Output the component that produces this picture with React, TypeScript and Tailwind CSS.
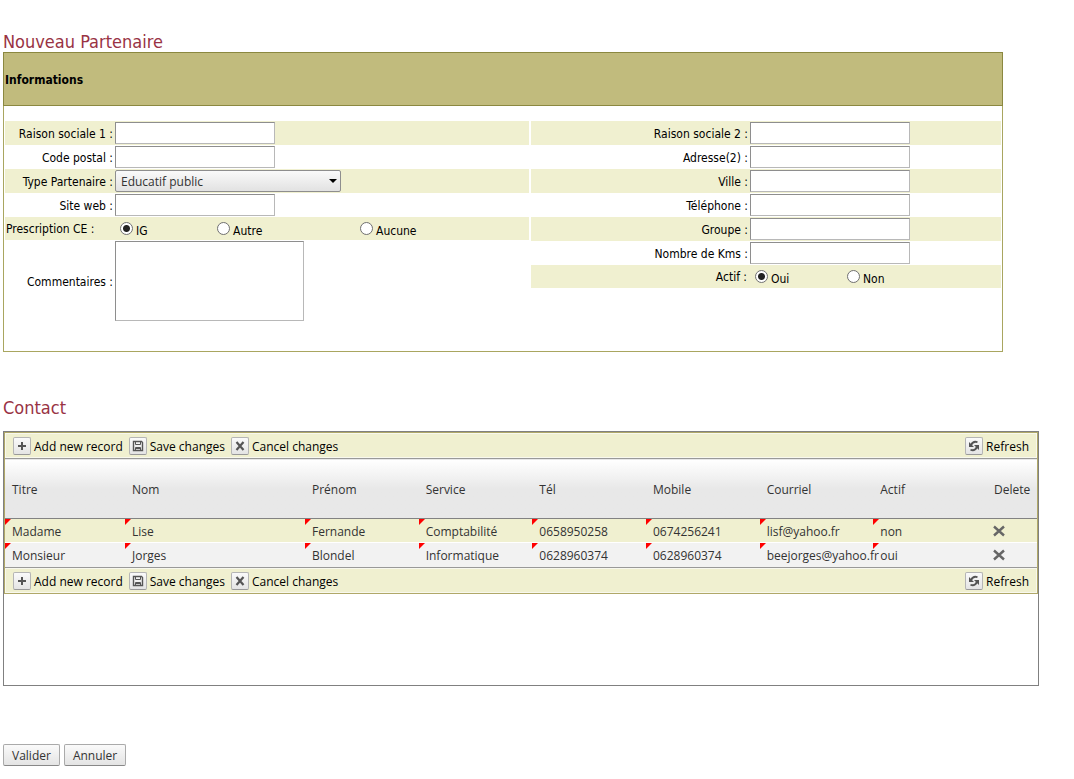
import { ReactNode } from "react";
import clsx from "clsx";

const tahoma = "font-['DejaVu_Sans_Condensed','DejaVu_Sans',sans-serif]";
const segoe = "font-['Open_Sans','Noto_Sans',sans-serif]";

const inputClass =
  "block h-[22px] w-40 border border-t-[#8e8e8e] border-l-[#8e8e8e] border-r-[#b8b8b8] border-b-[#b8b8b8] bg-white px-1 outline-none";

const contacts = [
  ["Madame", "Lise", "Fernande", "Comptabilité", "0658950258", "0674256241", "lisf@yahoo.fr", "non"],
  ["Monsieur", "Jorges", "Blondel", "Informatique", "0628960374", "0628960374", "beejorges@yahoo.fr", "oui"],
];

const columns = ["Titre", "Nom", "Prénom", "Service", "Tél", "Mobile", "Courriel", "Actif", "Delete"];

type RowProps = {
  id?: string;
  label: string;
  labelClass: string;
  shaded?: boolean;
  children: ReactNode;
};

function Row({ id, label, labelClass, shaded, children }: RowProps) {
  return (
    <div className={clsx("flex min-h-6 items-center", shaded && "bg-[#f0f0d0]")}>
      <label htmlFor={id} className={clsx("shrink-0 pt-0.5 pr-0.5 text-right whitespace-nowrap", labelClass)}>
        {label}
      </label>
      {children}
    </div>
  );
}

type TextRowProps = { id: string; label: string; labelClass: string; shaded?: boolean };

function TextRow({ id, label, labelClass, shaded }: TextRowProps) {
  return (
    <Row id={id} label={label} labelClass={labelClass} shaded={shaded}>
      <input id={id} type="text" className={inputClass} />
    </Row>
  );
}

type RadioProps = { name: string; label: string; checked?: boolean; className?: string };

function Radio({ name, label, checked, className }: RadioProps) {
  return (
    <label className={clsx("flex items-center gap-[3px]", className)}>
      <input
        type="radio"
        name={name}
        defaultChecked={checked}
        className="size-[13px] appearance-none rounded-full border border-[#707070] bg-white checked:bg-[radial-gradient(circle,#222_3px,#fff_4px)]"
      />
      <span className="pt-1">{label}</span>
    </label>
  );
}

function PlusIcon() {
  return (
    <svg viewBox="0 0 16 16" className="size-4" fill="none" stroke="#555" strokeWidth="2">
      <path d="M8 4v8M4 8h8" />
    </svg>
  );
}

function SaveIcon() {
  return (
    <svg viewBox="0 0 16 16" className="size-4" fill="none" stroke="#555">
      <path d="M3.5 3.5h8l1 1v8h-9z" strokeWidth="1.4" />
      <path d="M5.5 3.5v3h5v-3M5.5 12.5v-3h5v3M5.5 10.5h5" />
    </svg>
  );
}

function CancelIcon() {
  return (
    <svg viewBox="0 0 16 16" className="size-4" fill="none" stroke="#555" strokeWidth="2.2">
      <path d="M4.5 4l7 8M11.5 4l-7 8" />
    </svg>
  );
}

function RefreshIcon() {
  return (
    <svg viewBox="0 0 16 16" className="size-4" fill="none" stroke="#555" strokeWidth="1.8">
      <path d="M11.5 4.300C9 3.200 6.500 4.200 5 7M4.500 11.700C7 12.800 9.500 11.800 11 9" />
      <path d="M3 4v5h5zM13 12V7H8z" fill="#555" stroke="none" />
    </svg>
  );
}

function ToolButton({ icon, label }: { icon: ReactNode; label: string }) {
  return (
    <button type="button" className="flex items-center gap-[3px] text-black">
      <span className="flex size-[18px] items-center justify-center rounded-xs border border-[#b5b5b5] border-b-[#999] bg-linear-to-b from-[#fafafa] to-[#e4e4e4]">
        {icon}
      </span>
      <span className="pt-0.5">{label}</span>
    </button>
  );
}

function CommandBar() {
  return (
    <div className="flex h-[25px] items-center justify-between border border-[#f8f8ee] bg-[#f0f0d0] px-[7px]">
      <div className="flex gap-1.5">
        <ToolButton icon={<PlusIcon />} label="Add new record" />
        <ToolButton icon={<SaveIcon />} label="Save changes" />
        <ToolButton icon={<CancelIcon />} label="Cancel changes" />
      </div>
      <ToolButton icon={<RefreshIcon />} label="Refresh" />
    </div>
  );
}

function PartnerForm() {
  const left = "w-[110px]";
  const right = "w-[219px]";

  return (
    <section className="max-w-[1000px] border border-[#a9a660]">
      <h2 className="-mx-px -mt-px flex h-[54px] items-center border border-[#8b8840] bg-[#c1bb7d] px-px pt-0.5 font-bold">
        Informations
      </h2>
      <div className="grid grid-cols-[524fr_470fr] gap-0.5 px-px pt-[15px] pb-[29px]">
        <div>
          <TextRow id="raison1" label="Raison sociale 1 :" labelClass={left} shaded />
          <TextRow id="codePostal" label="Code postal :" labelClass={left} />
          <Row id="type" label="Type Partenaire :" labelClass={left} shaded>
            <div className="relative">
              <select
                id="type"
                className={clsx(
                  "block h-[22px] w-[226px] appearance-none rounded-xs border border-[#8e8e8e] bg-linear-to-b from-[#fafafa] to-[#e2e2e2] pt-0.5 pl-[5px] text-[#333]",
                  segoe
                )}
              >
                <option>Educatif public</option>
              </select>
              <svg viewBox="0 0 8 4" className="pointer-events-none absolute top-[9px] right-1 h-1 w-2">
                <path d="M0 0h8L4 4z" />
              </svg>
            </div>
          </Row>
          <TextRow id="siteWeb" label="Site web :" labelClass={left} />
          <fieldset className="flex h-[23px] items-center bg-[#f0f0d0]">
            <legend className="float-left w-[115px] pl-px">Prescription CE :</legend>
            <Radio name="prescription" label="IG" checked className="w-[97px]" />
            <Radio name="prescription" label="Autre" className="w-[143px]" />
            <Radio name="prescription" label="Aucune" />
          </fieldset>
          <Row id="commentaires" label="Commentaires :" labelClass={left}>
            <textarea
              id="commentaires"
              className="my-px block h-20 w-[189px] resize-none border border-t-[#8e8e8e] border-l-[#8e8e8e] border-r-[#b8b8b8] border-b-[#b8b8b8] outline-none"
            />
          </Row>
        </div>
        <div>
          <TextRow id="raison2" label="Raison sociale 2 :" labelClass={right} shaded />
          <TextRow id="adresse2" label="Adresse(2) :" labelClass={right} />
          <TextRow id="ville" label="Ville :" labelClass={right} shaded />
          <TextRow id="telephone" label="Téléphone :" labelClass={right} />
          <TextRow id="groupe" label="Groupe :" labelClass={right} shaded />
          <TextRow id="kms" label="Nombre de Kms :" labelClass={right} />
          <fieldset className="flex h-[23px] items-center bg-[#f0f0d0]">
            <legend className="float-left w-56 pr-2 text-right">Actif :</legend>
            <Radio name="actif" label="Oui" checked className="w-[92px]" />
            <Radio name="actif" label="Non" />
          </fieldset>
        </div>
      </div>
    </section>
  );
}

function ContactGrid() {
  return (
    <section className={clsx("min-h-[255px] max-w-[1036px] border border-[#808080] text-[#333]", segoe)}>
      <div className="border border-[#b0a868]">
        <CommandBar />
        <table className="w-full table-fixed border-collapse">
          <colgroup>
            <col className="w-[120px]" />
            <col className="w-[180px]" />
            <col span={6} />
            <col className="w-[50px]" />
          </colgroup>
          <thead>
            <tr className="h-[60px] border-y border-t-[#999] border-b-[#828282] bg-linear-to-b from-white to-[#e8e8e8] to-50%">
              {columns.map((column) => (
                <th key={column} className="pt-0.5 pl-[7px] text-left font-normal">
                  {column}
                </th>
              ))}
            </tr>
          </thead>
          <tbody>
            {contacts.map((contact, i) => (
              <tr
                key={contact[0]}
                className={clsx(
                  "border-b",
                  i === 0 ? "h-6 border-white bg-[#f0f0d0]" : "h-[25px] border-[#999] bg-[#f2f2f2]"
                )}
              >
                {contact.map((value, j) => (
                  <td key={j} className="relative pt-0.5 pl-[7px] whitespace-nowrap">
                    <svg viewBox="0 0 6 6" className="absolute top-0 left-0 size-1.5">
                      <path d="M0 0h6L0 6z" fill="red" />
                    </svg>
                    {value}
                  </td>
                ))}
                <td className="pl-1.5">
                  <button type="button" aria-label="Delete" className="block">
                    <svg viewBox="0 0 12 12" className="size-3" fill="none" stroke="#666" strokeWidth="2.4">
                      <path d="M1 1.500l10 9M11 1.500l-10 9" />
                    </svg>
                  </button>
                </td>
              </tr>
            ))}
          </tbody>
        </table>
        <CommandBar />
      </div>
    </section>
  );
}

function FormButton({ children }: { children: ReactNode }) {
  return (
    <button
      type="button"
      className={clsx(
        "h-[22px] rounded-xs border border-[#aaa] border-b-[#888] bg-linear-to-b from-[#fafafa] to-[#e4e4e4] px-2 pt-0.5 text-[#333]",
        segoe
      )}
    >
      {children}
    </button>
  );
}

export default function App() {
  return (
    <main className={clsx("bg-white px-[3px] pt-8 pb-3 text-xs text-black", tahoma)}>
      <h1 className="text-lg leading-5 text-[#993344]">Nouveau Partenaire</h1>
      <PartnerForm />
      <h1 className="mt-[46px] mb-[13px] text-lg leading-5 text-[#993344]">Contact</h1>
      <ContactGrid />
      <div className="mt-[58px] flex gap-1">
        <FormButton>Valider</FormButton>
        <FormButton>Annuler</FormButton>
      </div>
    </main>
  );
}
